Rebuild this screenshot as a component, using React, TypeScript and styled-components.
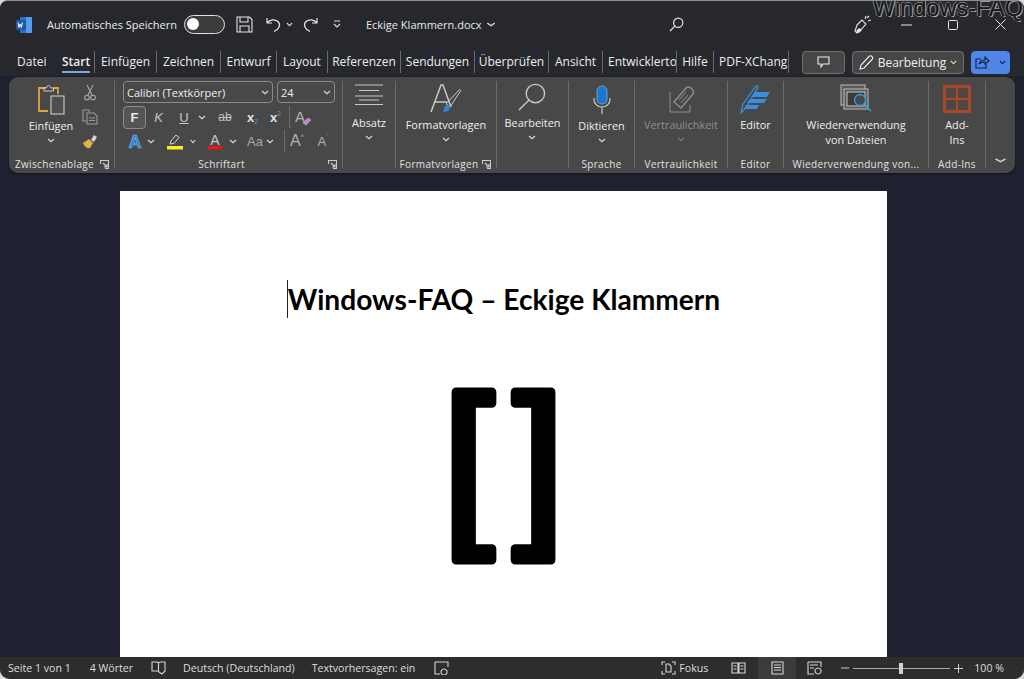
import React from "react";
import styled, { createGlobalStyle } from "styled-components";

const Global = createGlobalStyle`
  html, body { margin: 0; height: 100%; background: #d8d8d8; overflow: hidden; }
  #root { height: 100%; }
`;

const Win = styled.div`
  position: relative;
  height: 679px;
  display: flex;
  flex-direction: column;
  background: #1f2130;
  border-radius: 8px 8px 10px 10px;
  border-top: 1px solid #8d8d8d;
  box-sizing: border-box;
  overflow: hidden;
  font-family: "Open Sans", "Noto Sans", sans-serif;
  color: #e8e8e8;
`;

const Head = styled.div`
  background: #26282d;
  flex: none;
  height: 75px;
  display: flex;
  flex-direction: column;
`;

const TitleBar = styled.div`
  height: 47px;
  display: flex;
  align-items: center;
  padding-left: 16px;
`;

const Slot = styled.div<{ $left?: number }>`
  display: flex;
  align-items: center;
  flex: none;
  margin-left: ${(p) => p.$left ?? 0}px;
`;

const AutoSave = styled.span`
  font-size: 11px;
  margin-left: 15px;
  color: #ececec;
  white-space: nowrap;
`;

const Toggle = styled.div`
  width: 41px;
  height: 19px;
  box-sizing: border-box;
  border: 1.5px solid #e0e0e0;
  border-radius: 10px;
  background: #3d3d3d;
  margin-left: 7px;
  padding: 2px;
`;

const Knob = styled.div`
  width: 12px;
  height: 12px;
  border-radius: 50%;
  background: #fff;
`;

const DocName = styled.span`
  font-size: 11px;
  margin-left: 25px;
  margin-right: 4px;
  white-space: nowrap;
`;

const Watermark = styled.div`
  position: absolute;
  top: -6px;
  right: 1px;
  font-family: "Liberation Sans", sans-serif;
  font-size: 23.5px;
  color: #17181a;
  text-shadow: 1px 1px 0 #b5b5b5, -1px 0 0 #8f8f8f, 0 -1px 0 #8f8f8f;
  -webkit-text-stroke: 0.4px #17181a;
  white-space: nowrap;
`;

const TabBar = styled.div`
  height: 28px;
  display: flex;
  align-items: center;
  padding-left: 17px;
  position: relative;
`;

const Tab = styled.div<{ $w: number; $sep?: boolean; $active?: boolean; $clip?: boolean }>`
  position: relative;
  flex: none;
  width: ${(p) => p.$w}px;
  box-sizing: border-box;
  height: 22px;
  line-height: 21px;
  font-size: 12px;
  color: #ededed;
  white-space: nowrap;
  overflow: hidden;
  text-align: ${(p) => (p.$sep && !p.$active && !p.$clip ? "center" : "left")};
  padding-left: ${(p) => (p.$clip ? 5 : 0)}px;
  border-right: ${(p) => (p.$sep ? "1px solid #6a6a6a" : "none")};
  font-weight: ${(p) => (p.$active ? 600 : 400)};
`;

const TabLine = styled.div`
  position: absolute;
  left: 0;
  bottom: 0;
  width: 28px;
  height: 2px;
  background: #7aa7e8;
`;

const TabActions = styled.div`
  display: flex;
  align-items: center;
  margin-left: 13px;
  gap: 7px;
`;

const ActionBtn = styled.div<{ $w: number; $blue?: boolean }>`
  width: ${(p) => p.$w}px;
  height: 23px;
  box-sizing: border-box;
  border-radius: 4px;
  border: 1px solid ${(p) => (p.$blue ? "#4f86e8" : "#6f6f6f")};
  background: ${(p) => (p.$blue ? "#4f86e8" : "#464646")};
  display: flex;
  align-items: center;
  justify-content: center;
  gap: ${(p) => (p.$blue ? 9 : 4)}px;
  font-size: 12px;
  color: #f0f0f0;
`;

const Ribbon = styled.div`
  flex: none;
  height: 96px;
  margin: 1px 9px 0;
  background: #484848;
  border-radius: 9px;
  display: flex;
  box-shadow: 0 1px 3px rgba(0, 0, 0, 0.5);
`;

const Group = styled.div<{ $w: number; $end?: boolean }>`
  flex: none;
  width: ${(p) => p.$w}px;
  box-sizing: border-box;
  margin: 4px 0 5px;
  border-right: ${(p) => (p.$end ? "none" : "1px solid #6b6b6b")};
  display: flex;
  flex-direction: column;
`;

const GroupBody = styled.div`
  flex: 1;
  display: flex;
  justify-content: center;
  min-height: 0;
`;

const CollapseBody = styled.div`
  flex: 1;
  display: flex;
  justify-content: center;
  align-items: flex-end;
  padding-bottom: 5px;
`;

const GroupLabel = styled.div`
  flex: none;
  height: 16px;
  line-height: 15px;
  margin-bottom: -4px;
  font-size: 10px;
  letter-spacing: 0.35px;
  color: #e2e2e2;
  display: flex;
  align-items: center;
  white-space: nowrap;
`;

const LabelText = styled.span`
  flex: 1;
  text-align: center;
`;

const Launcher = styled.span`
  flex: none;
  width: 14px;
  display: flex;
`;

const Big = styled.div<{ $dim?: boolean }>`
  display: flex;
  flex-direction: column;
  align-items: center;
  font-size: 10.9px;
  line-height: 15px;
  color: ${(p) => (p.$dim ? "#8e8e8e" : "#efefef")};
  text-align: center;
  white-space: nowrap;
`;

const BigIcon = styled.div<{ $h?: number; $pb?: number }>`
  height: ${(p) => p.$h ?? 36}px;
  box-sizing: border-box;
  padding-bottom: ${(p) => p.$pb ?? 0}px;
  display: flex;
  align-items: center;
  justify-content: center;
`;

const ChevronRow = styled.div`
  height: 15px;
  display: flex;
  align-items: center;
  justify-content: center;
`;

const PasteCol = styled.div`
  width: 54px;
  margin-left: 15px;
  flex: none;
`;

const ClipTools = styled.div`
  width: 24px;
  flex: none;
  display: flex;
  flex-direction: column;
  align-items: center;
  gap: 8px;
  padding-top: 3px;
`;

const ClipRest = styled.div`
  flex: 1;
`;

const FontPanel = styled.div`
  width: 100%;
  padding-left: 8px;
  box-sizing: border-box;
  display: flex;
  flex-direction: column;
`;

const ComboRow = styled.div`
  display: flex;
  gap: 4px;
  height: 24px;
`;

const Combo = styled.div<{ $w: number }>`
  width: ${(p) => p.$w}px;
  height: 22px;
  box-sizing: border-box;
  border: 1px solid #8a8a8a;
  border-radius: 4px;
  display: flex;
  align-items: center;
  justify-content: space-between;
  padding: 0 3px;
  font-size: 11px;
  color: #efefef;
`;

const ToolRow = styled.div`
  display: flex;
  align-items: center;
  height: 24px;
`;

const ToolBtn = styled.div<{ $w: number; $on?: boolean; $ml?: number }>`
  flex: none;
  width: ${(p) => p.$w}px;
  margin-left: ${(p) => p.$ml ?? 0}px;
  height: 23px;
  box-sizing: border-box;
  display: flex;
  align-items: center;
  justify-content: center;
  border-radius: 4px;
  border: ${(p) => (p.$on ? "1px solid #8c8c8c" : "none")};
  background: ${(p) => (p.$on ? "#555" : "transparent")};
  font-size: 12px;
  color: #d4d4d4;
`;

const Glyph = styled.span<{ $c?: string; $w?: number; $i?: boolean; $s?: number; $u?: boolean; $strike?: boolean; $shift?: number }>`
  font-family: "Liberation Sans", sans-serif;
  color: ${(p) => p.$c ?? "#c4c4c4"};
  font-weight: ${(p) => p.$w ?? 400};
  font-style: ${(p) => (p.$i ? "italic" : "normal")};
  font-size: ${(p) => p.$s ?? 13}px;
  text-decoration: ${(p) => (p.$u ? "underline" : p.$strike ? "line-through" : "none")};
  margin-top: ${(p) => Math.max(p.$shift ?? 0, 0)}px;
  margin-bottom: ${(p) => Math.max(-(p.$shift ?? 0), 0)}px;
`;

const ToolSep = styled.div`
  width: 1px;
  height: 22px;
  background: #6b6b6b;
  flex: none;
`;

const Content = styled.div`
  flex: 1;
  min-height: 0;
  padding: 18px 17px 0 0;
  display: flex;
  justify-content: center;
  overflow: hidden;
`;

const Paper = styled.div`
  width: 767px;
  height: 480px;
  flex: none;
  background: #fff;
  color: #000;
  display: flex;
  flex-direction: column;
  align-items: center;
  padding-top: 89px;
  box-sizing: border-box;
`;

const DocTitle = styled.div`
  font-family: Lato, "Open Sans", sans-serif;
  font-weight: 700;
  font-size: 28.15px;
  line-height: 38px;
  white-space: nowrap;
  display: flex;
  align-items: center;
`;

const Caret = styled.span`
  width: 1px;
  height: 38px;
  background: #222;
  flex: none;
`;

const Brackets = styled.svg`
  margin-top: 49px;
  flex: none;
  font-family: "Liberation Sans", sans-serif;
  font-size: 180px;
  fill: #000;
  stroke: #000;
  stroke-width: 9px;
  stroke-linejoin: round;
`;

const Status = styled.div`
  flex: none;
  height: 22px;
  background: #2d2d2d;
  display: flex;
  align-items: center;
  font-size: 10.6px;
  color: #dedede;
  padding-left: 8px;
`;

const StatusItem = styled.span<{ $left?: number }>`
  flex: none;
  display: flex;
  align-items: center;
  gap: 3px;
  white-space: nowrap;
  margin-left: ${(p) => p.$left ?? 0}px;
`;

const ViewActive = styled.span<{ $left: number }>`
  flex: none;
  height: 22px;
  width: 38px;
  margin-left: ${(p) => p.$left}px;
  background: #3b3b3b;
  display: flex;
  align-items: center;
  justify-content: center;
`;

const Slider = styled.div`
  position: relative;
  width: 97px;
  height: 1px;
  background: #aaa;
  margin-left: 4px;
  flex: none;
`;

const Thumb = styled.div`
  position: absolute;
  left: 46px;
  top: -5px;
  width: 4px;
  height: 11px;
  background: #cfcfcf;
`;

const Ln = { fill: "none", stroke: "currentColor", strokeWidth: 1.1 } as const;

const Chev = ({ c = "#d8d8d8", w = 8 }: { c?: string; w?: number }) => (
  <svg width={w} height="5" viewBox="0 0 8 5" preserveAspectRatio="none">
    <path d="M1 1l3 2.600L7 1" fill="none" stroke={c} strokeWidth="1.200" />
  </svg>
);

const LaunchIcon = () => (
  <svg width="9" height="9" viewBox="0 0 9 9" style={{ color: "#ccc" }}>
    <path d="M.5 4V.5h8v8H5" {...Ln} />
    <path d="M3 3l4 4M7 4v3H4" {...Ln} />
  </svg>
);

const WordIcon = () => (
  <svg width="16" height="16" viewBox="0 0 16 16">
    <rect x="4" y="0" width="12" height="16" rx="1" fill="#2f6fd0" />
    <rect x="10" y="0" width="6" height="16" rx="1" fill="#5a9cf0" />
    <rect x="0" y="3" width="10" height="10" rx="1" fill="#1c56ad" />
    <path d="M2 5.500l1 5 1.200-3.600 1.200 3.600 1-5" fill="none" stroke="#fff" strokeWidth="1" />
  </svg>
);

const SaveIcon = () => (
  <svg width="17" height="17" viewBox="0 0 17 17" style={{ color: "#e4e4e4" }}>
    <path d="M1 1h12.500L16 3.500V16H1z" {...Ln} />
    <path d="M4 1v5h8V1M4 16v-6h9v6" {...Ln} />
  </svg>
);

const UndoIcon = () => (
  <svg width="16" height="17" viewBox="0 0 16 17" style={{ color: "#e4e4e4" }}>
    <path d="M1 2v5h5M1 7c3-4 8-4 11-1.500 3 3 1.500 7.500-4 10" {...Ln} strokeWidth="1.200" />
  </svg>
);

const RedoIcon = () => (
  <svg width="16" height="17" viewBox="0 0 16 17" style={{ color: "#e4e4e4" }}>
    <path d="M15 2v5h-5M15 7C12 3 7 3 4 5.500c-3 3-1.500 7.500 4 10" {...Ln} strokeWidth="1.200" />
  </svg>
);

const QuickIcon = () => (
  <svg width="8" height="9" viewBox="0 0 8 9">
    <path d="M1 1h6M1 4l3 3 3-3" fill="none" stroke="#dcdcdc" strokeWidth="1.100" />
  </svg>
);

const SearchIcon = ({ s = 15, c = "#e6e6e6" }: { s?: number; c?: string }) => (
  <svg width={s} height={s} viewBox="0 0 15 15" style={{ color: c }}>
    <circle cx="9.200" cy="5.800" r="4.600" fill="none" stroke="currentColor" strokeWidth={s > 20 ? 0.7 : 1.2} />
    <path d="M5.900 9.100L1 14" fill="none" stroke="currentColor" strokeWidth={s > 20 ? 0.7 : 1.2} />
  </svg>
);

const WandIcon = () => (
  <svg width="17" height="19" viewBox="0 0 17 19" style={{ color: "#e6e6e6" }}>
    <path d="M3 10l5-5 4 4-5 5.500-4 3.500-2-2z" {...Ln} />
    <path d="M2 16l3-3 3 2-3 3z" fill="#e6e6e6" />
    <path d="M11 4l1-3M14 6l3-1M13 3l2-2" {...Ln} />
  </svg>
);

const PencilIcon = () => (
  <svg width="15" height="15" viewBox="0 0 15 15" style={{ color: "#eee" }}>
    <path d="M1 14l1-4 8-8.500c1-1 2-1 3 0s1 2 0 3L5 13z" {...Ln} />
  </svg>
);

const CommentIcon = () => (
  <svg width="13" height="12" viewBox="0 0 13 12" style={{ color: "#eee" }}>
    <path d="M1 1h11v7H6l-2 3V8H1z" {...Ln} />
  </svg>
);

const ShareIcon = () => (
  <svg width="15" height="13" viewBox="0 0 15 13" style={{ color: "#10203f" }}>
    <path d="M6 3H1v9h10V8" {...Ln} />
    <path d="M4 8c1-3 4-4 6-4V1l4 4-4 3V6C8 6 6 6 4 8z" {...Ln} />
  </svg>
);

const PasteIcon = () => (
  <svg width="28" height="31" viewBox="0 0 28 31">
    <path d="M10 4H2v23h9" fill="none" stroke="#e3a33f" strokeWidth="1.800" />
    <path d="M16 4h5v6" fill="none" stroke="#e3a33f" strokeWidth="1.800" />
    <path d="M7 7V4h2.500c0-3 4-3 4.500 0h2.500v3z" fill="#484848" stroke="#cfcfcf" strokeWidth="1" />
    <rect x="14" y="12" width="13" height="18" fill="#4e4e4e" stroke="#d8d8d8" strokeWidth="1" />
  </svg>
);

const ScissorsIcon = () => (
  <svg width="12" height="17" viewBox="0 0 12 17" style={{ color: "#a8a8a8" }}>
    <path d="M3 1l5 10M9 1L4 11" {...Ln} />
    <circle cx="3" cy="13.500" r="2.300" {...Ln} />
    <circle cx="9" cy="13.500" r="2.300" {...Ln} />
  </svg>
);

const CopyIcon = () => (
  <svg width="16" height="16" viewBox="0 0 16 16" style={{ color: "#9a9a9a" }}>
    <path d="M7 3V1H1v11h4" {...Ln} />
    <path d="M5 4h7l3 3v8H5zM7 9h6M7 11.500h6" {...Ln} />
  </svg>
);

const BrushIcon = () => (
  <svg width="16" height="16" viewBox="0 0 16 16">
    <path d="M9 7l3-5 3 2-3 5z" fill="#d5d5d5" />
    <path d="M1 10l6-4 4 4-3 5c-3 1-6-2-7-5z" fill="#e3b04b" />
  </svg>
);

const EraserA = () => (
  <svg width="17" height="17" viewBox="0 0 17 17">
    <text x="0" y="13" fontSize="15" fontFamily="Liberation Sans" fill="#b5b5b5">A</text>
    <path d="M8 14l5-5 3 2-5 5z" fill="#b77fcc" stroke="#d9a7ea" strokeWidth=".6" />
  </svg>
);

const ColorLetter = ({ bar, fill }: { bar: string; fill: string }) => (
  <svg width="16" height="17" viewBox="0 0 16 17">
    <text x="8" y="11.500" textAnchor="middle" fontSize="14" fontFamily="Liberation Sans" fill={fill}>A</text>
    <rect x="1" y="13" width="14" height="3.500" fill={bar} />
  </svg>
);

const HighlightIcon = () => (
  <svg width="16" height="17" viewBox="0 0 16 17">
    <path d="M3 11l1-3 5-6 3 2.500-5 6z" fill="none" stroke="#d4d4d4" strokeWidth="1" />
    <rect x="0" y="13" width="16" height="3.500" fill="#f5ee22" />
  </svg>
);

const TextEffect = () => (
  <svg width="16" height="17" viewBox="0 0 16 17">
    <text x="8" y="15" textAnchor="middle" fontSize="18" fontWeight="700" fontFamily="Liberation Sans" fill="#2f7fd0" stroke="#7fc0f5" strokeWidth=".6">A</text>
  </svg>
);

const ParagraphIcon = () => (
  <svg width="28" height="22" viewBox="0 0 28 22">
    <path d="M0 1h28M4 6.500h20M0 12h28M0 20.500h28M4 16h20" fill="none" stroke="#c8c8c8" strokeWidth="1" />
  </svg>
);

const StylesIcon = () => (
  <svg width="32" height="30" viewBox="0 0 32 30">
    <path d="M1 28L11 1h2l8 22M5 18h12" fill="none" stroke="#c8c8c8" strokeWidth="1.500" />
    <path d="M16 20L29 6c1-1 2 0 1.500 1L20 23z" fill="none" stroke="#c8c8c8" strokeWidth="1" />
    <path d="M13 28c1-1 1-6 4-7 2-1 4 1 3 3-1 3-4 4-7 4z" fill="#2f88d8" />
  </svg>
);

const MicIcon = () => (
  <svg width="20" height="30" viewBox="0 0 20 30">
    <rect x="5" y="1" width="10" height="18" rx="5" fill="#1777d1" stroke="#9cc9f2" strokeWidth=".6" />
    <path d="M2 13v2c0 4 4 7 8 7s8-3 8-7v-2M10 22v7" fill="none" stroke="#c6c6c6" strokeWidth="1.200" />
  </svg>
);

const SensitivityIcon = () => (
  <svg width="28" height="29" viewBox="0 0 28 29" style={{ color: "#8c8c8c" }}>
    <path d="M3 7v20h20v-7" fill="none" stroke="currentColor" strokeWidth="1" />
    <path d="M7 17L19 3c2-2 4-1 6 1s2 3 1 5L14 23z" fill="none" stroke="currentColor" strokeWidth="1.500" />
    <path d="M12 15l7-8M14 18l7-8" fill="none" stroke="currentColor" strokeWidth="1" />
  </svg>
);

const EditorIcon = () => (
  <svg width="30" height="30" viewBox="0 0 30 30">
    <path d="M1 29l2-9L16 2c1-1 2 0 2 1L6 24z" fill="none" stroke="#3a8ee0" strokeWidth="1.200" />
    <path d="M15 8h15l-3 5H11zM10 15h17l-3 4H7zM6 21h13l-2 4H4z" fill="#3a8ee0" />
  </svg>
);

const ReuseIcon = () => (
  <svg width="32" height="30" viewBox="0 0 32 30">
    <rect x="1" y="1" width="24" height="20" fill="#595959" stroke="#bcbcbc" strokeWidth="1" />
    <rect x="4" y="5" width="24" height="20" fill="#595959" stroke="#bcbcbc" strokeWidth="1" />
    <rect x="7" y="8" width="18" height="14" fill="#3b3b3b" stroke="#c8c8c8" strokeWidth="1" />
    <circle cx="20" cy="16" r="5.500" fill="#494949" stroke="#2f9fe8" strokeWidth="1.300" />
    <path d="M24 20l7 7" stroke="#2f9fe8" strokeWidth="1.500" />
  </svg>
);

const AddInsIcon = () => (
  <svg width="28" height="28" viewBox="0 0 28 28">
    <rect x="0" y="0" width="28" height="28" fill="#a8472a" />
    <rect x="3" y="3" width="10" height="10" fill="#4f4643" />
    <rect x="15" y="3" width="10" height="10" fill="#4f4643" />
    <rect x="3" y="15" width="10" height="10" fill="#4f4643" />
    <rect x="15" y="15" width="10" height="10" fill="#4f4643" />
  </svg>
);

const StatIcon = ({ d, w = 15 }: { d: string; w?: number }) => (
  <svg width={w} height="14" viewBox="0 0 15 14" style={{ color: "#d6d6d6" }}>
    <path d={d} {...Ln} />
  </svg>
);

const BigTool = ({
  icon,
  lines,
  h,
  pb,
  dim,
  chevron,
}: {
  icon: React.ReactNode;
  lines: string[];
  h?: number;
  pb?: number;
  dim?: boolean;
  chevron?: boolean;
}) => (
  <Big $dim={dim}>
    <BigIcon $h={h} $pb={pb}>
      {icon}
    </BigIcon>
    {lines.map((l) => (
      <div key={l}>{l}</div>
    ))}
    {chevron && (
      <ChevronRow>
        <Chev c={dim ? "#777" : "#d8d8d8"} />
      </ChevronRow>
    )}
  </Big>
);

const tabs: [string, number, boolean?][] = [
  ["Einfügen", 62],
  ["Zeichnen", 64],
  ["Entwurf", 56],
  ["Layout", 51],
  ["Referenzen", 73],
  ["Sendungen", 74],
  ["Überprüfen", 74],
  ["Ansicht", 54],
  ["Entwicklerto", 74, true],
  ["Hilfe", 37],
  ["PDF-XChang", 75, true],
];

export default function App() {
  return (
    <>
      <Global />
      <Win>
        <Head>
          <TitleBar>
            <WordIcon />
            <AutoSave>Automatisches Speichern</AutoSave>
            <Toggle>
              <Knob />
            </Toggle>
            <Slot $left={11}>
              <SaveIcon />
            </Slot>
            <Slot $left={13}>
              <UndoIcon />
            </Slot>
            <Slot $left={4}>
              <Chev w={7} />
            </Slot>
            <Slot $left={9}>
              <RedoIcon />
            </Slot>
            <Slot $left={15}>
              <QuickIcon />
            </Slot>
            <DocName>Eckige Klammern.docx</DocName>
            <Chev w={10} />
            <Slot $left={173}>
              <SearchIcon />
            </Slot>
            <Slot $left={170}>
              <WandIcon />
            </Slot>
            <Slot $left={30}>
              <svg width="11" height="2" viewBox="0 0 11 2">
                <path d="M0 1h11" stroke="#e8e8e8" strokeWidth="1" />
              </svg>
            </Slot>
            <Slot $left={36}>
              <svg width="10" height="10" viewBox="0 0 10 10">
                <rect x=".5" y=".5" width="9" height="9" rx="1" fill="none" stroke="#e8e8e8" />
              </svg>
            </Slot>
            <Slot $left={37}>
              <svg width="11" height="11" viewBox="0 0 11 11">
                <path d="M.5.5l10 10M10.500.5l-10 10" stroke="#e8e8e8" strokeWidth="1" />
              </svg>
            </Slot>
          </TitleBar>
          <TabBar>
            <Tab $w={45}>Datei</Tab>
            <Tab $w={33} $sep $active>
              Start
              <TabLine />
            </Tab>
            {tabs.map(([t, w, clip]) => (
              <Tab key={t} $w={w} $sep $clip={clip}>
                {t}
              </Tab>
            ))}
            <TabActions>
              <ActionBtn $w={43}>
                <CommentIcon />
              </ActionBtn>
              <ActionBtn $w={112}>
                <PencilIcon />
                Bearbeitung
                <Chev w={7} />
              </ActionBtn>
              <ActionBtn $w={39} $blue>
                <ShareIcon />
                <Chev c="#10203f" w={7} />
              </ActionBtn>
            </TabActions>
          </TabBar>
        </Head>

        <Ribbon>
          <Group $w={106}>
            <GroupBody>
              <PasteCol>
                <BigTool icon={<PasteIcon />} lines={["Einfügen"]} h={37} chevron />
              </PasteCol>
              <ClipTools>
                <ScissorsIcon />
                <CopyIcon />
                <BrushIcon />
              </ClipTools>
              <ClipRest />
            </GroupBody>
            <GroupLabel>
              <LabelText>Zwischenablage</LabelText>
              <Launcher>
                <LaunchIcon />
              </Launcher>
            </GroupLabel>
          </Group>

          <Group $w={228}>
            <GroupBody>
              <FontPanel>
                <ComboRow>
                  <Combo $w={150}>
                    Calibri (Textkörper)
                    <Chev />
                  </Combo>
                  <Combo $w={58}>
                    24
                    <Chev />
                  </Combo>
                </ComboRow>
                <ToolRow>
                  <ToolBtn $w={23} $on>
                    <Glyph $w={700} $c="#e8e8e8">F</Glyph>
                  </ToolBtn>
                  <ToolBtn $w={25}>
                    <Glyph $i>K</Glyph>
                  </ToolBtn>
                  <ToolBtn $w={26}>
                    <Glyph $u>U</Glyph>
                  </ToolBtn>
                  <ToolBtn $w={10}>
                    <Chev />
                  </ToolBtn>
                  <ToolBtn $w={36}>
                    <Glyph $strike $s={12}>ab</Glyph>
                  </ToolBtn>
                  <ToolBtn $w={19}>
                    <Glyph $w={700} $c="#e0e0e0">x</Glyph>
                    <Glyph $s={7} $c="#3f9be8" $shift={8}>2</Glyph>
                  </ToolBtn>
                  <ToolBtn $w={27}>
                    <Glyph $w={700} $c="#e0e0e0">x</Glyph>
                    <Glyph $s={7} $c="#3f9be8" $shift={-8}>2</Glyph>
                  </ToolBtn>
                  <ToolSep />
                  <ToolBtn $w={26}>
                    <EraserA />
                  </ToolBtn>
                </ToolRow>
                <ToolRow>
                  <ToolBtn $w={24}>
                    <TextEffect />
                  </ToolBtn>
                  <ToolBtn $w={8}>
                    <Chev />
                  </ToolBtn>
                  <ToolBtn $w={30} $ml={5}>
                    <HighlightIcon />
                  </ToolBtn>
                  <ToolBtn $w={6}>
                    <Chev />
                  </ToolBtn>
                  <ToolBtn $w={20} $ml={9}>
                    <ColorLetter bar="#e8141b" fill="#c8c8c8" />
                  </ToolBtn>
                  <ToolBtn $w={15}>
                    <Chev />
                  </ToolBtn>
                  <ToolBtn $w={20} $ml={5}>
                    <Glyph $s={13} $c="#a8a8a8">Aa</Glyph>
                  </ToolBtn>
                  <ToolBtn $w={10}>
                    <Chev />
                  </ToolBtn>
                  <ToolBtn $w={1} $ml={8} />
                  <ToolSep />
                  <ToolBtn $w={24}>
                    <Glyph $s={16} $c="#b0b0b0">A</Glyph>
                    <Glyph $s={7} $c="#8fc4f0" $shift={-9}>^</Glyph>
                  </ToolBtn>
                  <ToolBtn $w={24} $ml={2}>
                    <Glyph $s={13} $c="#b0b0b0">A</Glyph>
                    <Glyph $s={7} $c="#3f9be8" $shift={-9}>ˇ</Glyph>
                  </ToolBtn>
                </ToolRow>
              </FontPanel>
            </GroupBody>
            <GroupLabel>
              <LabelText>Schriftart</LabelText>
              <Launcher>
                <LaunchIcon />
              </Launcher>
            </GroupLabel>
          </Group>

          <Group $w={53}>
            <GroupBody>
              <BigTool icon={<ParagraphIcon />} lines={["Absatz"]} h={34} pb={6} chevron />
            </GroupBody>
          </Group>

          <Group $w={101}>
            <GroupBody>
              <BigTool icon={<StylesIcon />} lines={["Formatvorlagen"]} chevron />
            </GroupBody>
            <GroupLabel>
              <LabelText>Formatvorlagen</LabelText>
              <Launcher>
                <LaunchIcon />
              </Launcher>
            </GroupLabel>
          </Group>

          <Group $w={72}>
            <GroupBody>
              <BigTool icon={<SearchIcon s={30} c="#c8c8c8" />} lines={["Bearbeiten"]} h={34} pb={2} chevron />
            </GroupBody>
          </Group>

          <Group $w={66}>
            <GroupBody>
              <BigTool icon={<MicIcon />} lines={["Diktieren"]} h={37} chevron />
            </GroupBody>
            <GroupLabel>
              <LabelText>Sprache</LabelText>
            </GroupLabel>
          </Group>

          <Group $w={93}>
            <GroupBody>
              <BigTool icon={<SensitivityIcon />} lines={["Vertraulichkeit"]} dim chevron />
            </GroupBody>
            <GroupLabel>
              <LabelText>Vertraulichkeit</LabelText>
            </GroupLabel>
          </Group>

          <Group $w={56}>
            <GroupBody>
              <BigTool icon={<EditorIcon />} lines={["Editor"]} />
            </GroupBody>
            <GroupLabel>
              <LabelText>Editor</LabelText>
            </GroupLabel>
          </Group>

          <Group $w={145}>
            <GroupBody>
              <BigTool icon={<ReuseIcon />} lines={["Wiederverwendung", "von Dateien"]} />
            </GroupBody>
            <GroupLabel>
              <LabelText>Wiederverwendung von...</LabelText>
            </GroupLabel>
          </Group>

          <Group $w={57}>
            <GroupBody>
              <BigTool icon={<AddInsIcon />} lines={["Add-", "Ins"]} />
            </GroupBody>
            <GroupLabel>
              <LabelText>Add-Ins</LabelText>
            </GroupLabel>
          </Group>

          <Group $w={29} $end>
            <CollapseBody>
              <Chev w={13} />
            </CollapseBody>
          </Group>
        </Ribbon>

        <Content>
          <Paper>
            <DocTitle>
              <Caret />
              Windows-FAQ – Eckige Klammern
            </DocTitle>
            <Brackets width="123" height="220" viewBox="0 0 123 220">
              <text x="1.200" y="155.700">[</text>
              <text x="71.800" y="155.700">]</text>
            </Brackets>
          </Paper>
        </Content>

        <Status>
          <StatusItem>Seite 1 von 1</StatusItem>
          <StatusItem $left={19}>4 Wörter</StatusItem>
          <StatusItem $left={18}>
            <StatIcon d="M1 1h5l1.500 1L9 1h5v9l-3 3-3-2-1-1H1zM7.500 2v9" />
          </StatusItem>
          <StatusItem $left={17}>Deutsch (Deutschland)</StatusItem>
          <StatusItem $left={17}>Textvorhersagen: ein</StatusItem>
          <StatusItem $left={19}>
            <StatIcon d="M1 1h13v5M1 1v12h5M10 8a3 3 0 1 0 .1 0z" />
          </StatusItem>
          <StatusItem $left={212}>
            <StatIcon d="M1 4V1h3M11 1h3v3M1 10v3h3M11 13h3v-3M5 3h3l2 2v6H5z" />
            Fokus
          </StatusItem>
          <StatusItem $left={23}>
            <StatIcon d="M1 2h6v10H1zM8 2h6v10H8zM2.500 5h3M2.500 8h3M9.500 5h3M9.500 8h3" />
          </StatusItem>
          <ViewActive $left={12}>
            <StatIcon d="M2 1h11v12H2zM4 4h7M4 6.500h7M4 9h7" />
          </ViewActive>
          <StatusItem $left={11}>
            <StatIcon d="M1 1h13v5M1 1v12h6M3 4h8M3 7h4M11 7a3 3 0 1 0 .1 0z" />
          </StatusItem>
          <StatusItem $left={19}>
            <svg width="8" height="2" viewBox="0 0 8 2">
              <path d="M0 1h8" stroke="#ccc" />
            </svg>
          </StatusItem>
          <Slider>
            <Thumb />
          </Slider>
          <StatusItem $left={4}>
            <svg width="9" height="9" viewBox="0 0 9 9">
              <path d="M0 4.500h9M4.500 0v9" stroke="#ccc" />
            </svg>
          </StatusItem>
          <StatusItem $left={11}>100 %</StatusItem>
        </Status>
        <Watermark>Windows-FAQ</Watermark>
      </Win>
    </>
  );
}
